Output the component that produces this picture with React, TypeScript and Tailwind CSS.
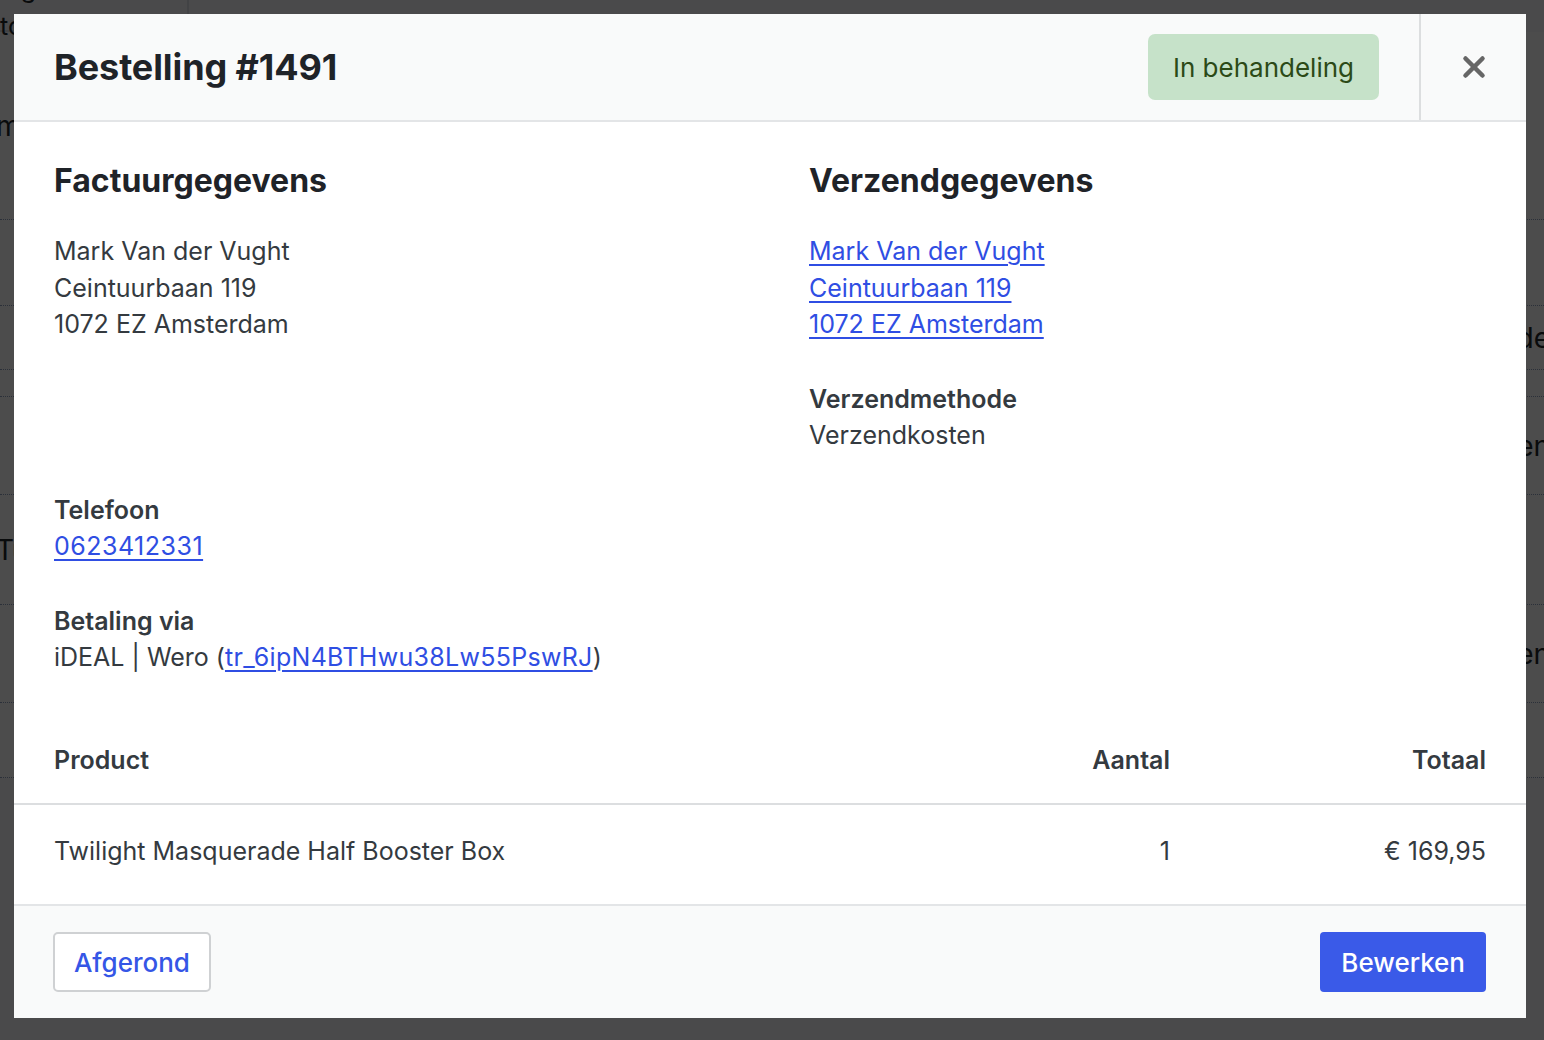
import { X } from 'lucide-react';

const font = { fontFamily: 'Inter, "Noto Sans", sans-serif' };

const bgRows = [
  { h: 'h-[188px]', l: 'm', r: '' },
  { h: 'h-[86px]', l: '', r: '' },
  { h: 'h-[64px]', l: '', r: 'de' },
  { h: 'h-[27px]', l: '', r: '' },
  { h: 'h-[98px]', l: '', r: 'en' },
  { h: 'h-[110px]', l: 'Tu', r: '' },
  { h: 'h-[98px]', l: '', r: 'en' },
  { h: 'h-[75px]', l: '', r: '' },
];

function BackgroundPage() {
  return (
    <div className="w-[1544px] h-[1040px] bg-[#f8f9fa] overflow-hidden" style={font}>
      <div className="flex h-[46px] -mt-[14px]">
        <div className="w-[189px] border-r-2 border-b-2 border-[#dee2e6] flex items-center justify-end pr-6 text-[25px] text-[#212529]">ing toevoegen</div>
      </div>
      {bgRows.map((r, i) => (
        <div key={i} className={`${r.h} flex items-center justify-between border-b border-dotted border-[#8fa0c0] text-[28px] text-[#212529] bg-[#fdfdfd]`}>
          <span className="-ml-[4px]">{r.l}</span>
          <span className="-mr-[6px]">{r.r}</span>
        </div>
      ))}
    </div>
  );
}

export default function App() {
  const link = 'text-[#2f4ee3] underline underline-offset-[4px] decoration-[1.5px]';
  return (
    <div className="relative w-[1544px] h-[1040px] overflow-hidden" style={font}>
      <BackgroundPage />
      <div className="fixed inset-0 bg-black/70 pt-[14px] pl-[14px]">
        <div className="w-[1512px] h-[1004px] bg-white flex flex-col overflow-hidden">
          <div className="h-[108px] shrink-0 flex items-stretch bg-[#f9fafa] border-b-2 border-[#e3e5e7]">
            <h1 className="flex-1 flex items-center pl-10 text-[36px] font-bold text-[#1f2328] tracking-[-0.1px]">Bestelling #1491</h1>
            <div className="flex items-center pr-10">
              <span className="h-[66px] px-[25px] flex items-center rounded-[7px] bg-[#c6e2c9] text-[#2c4a17] text-[26px]">In behandeling</span>
            </div>
            <button className="w-[107px] border-l-2 border-[#dcdedf] flex items-center justify-center text-[#666]">
              <X size={34} strokeWidth={3.2} />
            </button>
          </div>

          <div className="flex-1 pt-10 text-[25px] leading-[36.5px] text-[#343a40]">
            <div className="px-10">
              <div className="grid grid-cols-2 gap-x-[78px]">
                <div>
                  <h2 className="text-[32px] leading-[38px] font-bold text-[#1f2328] mb-[33px]">Factuurgegevens</h2>
                  <div>Mark Van der Vught</div>
                  <div>Ceintuurbaan 119</div>
                  <div>1072 EZ Amsterdam</div>
                </div>
                <div>
                  <h2 className="text-[32px] leading-[38px] font-bold text-[#1f2328] mb-[33px]">Verzendgegevens</h2>
                  <div><a className={link}>Mark Van der Vught</a></div>
                  <div><a className={link}>Ceintuurbaan 119</a></div>
                  <div><a className={link}>1072 EZ Amsterdam</a></div>
                  <div className="mt-[38px] font-semibold">Verzendmethode</div>
                  <div>Verzendkosten</div>
                </div>
              </div>
              <div className="mt-[38px]">
                <div className="font-semibold">Telefoon</div>
                <a className={`${link} tracking-[0.5px]`}>0623412331</a>
              </div>
              <div className="mt-[38px]">
                <div className="font-semibold">Betaling via</div>
                <div>iDEAL | Wero (<a className={`${link} tracking-[0.3px]`}>tr_6ipN4BTHwu38Lw55PswRJ</a>)</div>
              </div>
            </div>

            <div className="mt-[41px]">
              <div className="grid grid-cols-[1fr_200px_356px] border-b-2 border-[#dcdee0] font-semibold py-[25px]">
                <div className="pl-10">Product</div>
                <div className="text-right">Aantal</div>
                <div className="text-right pr-10">Totaal</div>
              </div>
              <div className="grid grid-cols-[1fr_200px_356px] pt-[28px] pb-[34px]">
                <div className="pl-10">Twilight Masquerade Half Booster Box</div>
                <div className="text-right">1</div>
                <div className="text-right pr-10">€ 169,95</div>
              </div>
            </div>
          </div>

          <div className="h-[114px] shrink-0 bg-[#f9fafa] border-t-2 border-[#e3e5e7] flex items-center justify-between px-10">
            <button className="h-[60px] px-[19px] -ml-px rounded-[5px] border-2 border-[#cfd1d3] bg-white text-[26px] font-medium text-[#3556e6]">Afgerond</button>
            <button className="h-[60px] px-[21px] rounded-[4px] bg-[#3a5ae8] text-[26px] font-medium text-white">Bewerken</button>
          </div>
        </div>
      </div>
    </div>
  );
}
